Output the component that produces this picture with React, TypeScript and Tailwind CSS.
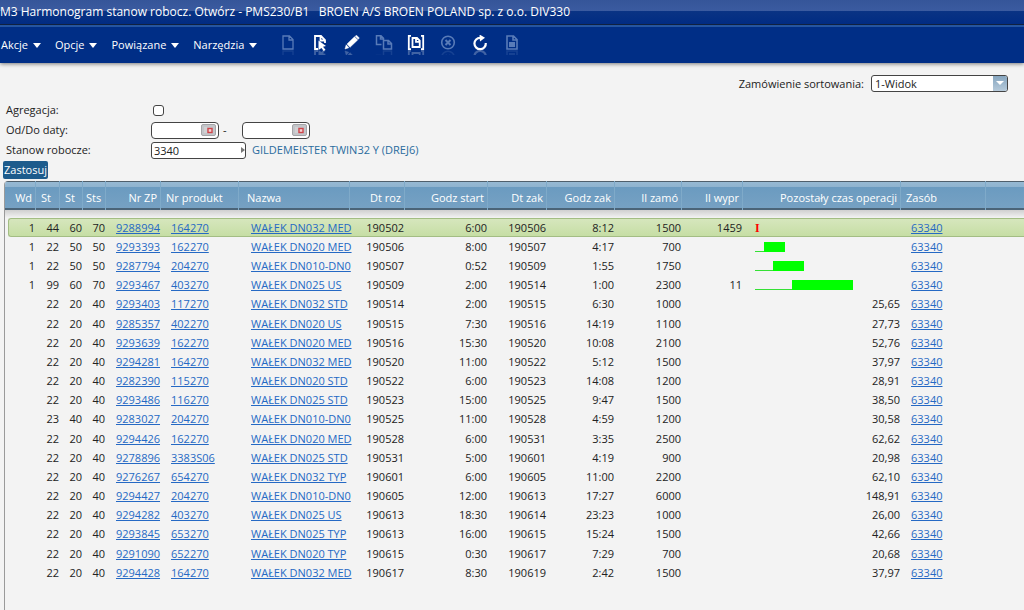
import React, { useState } from 'react';

interface Bar {
  offset: number;
  width: number;
}

interface Operation {
  wd: string;
  st1: string;
  st2: string;
  sts: string;
  order: string;
  product: string;
  name: string;
  startDate: string;
  startTime: string;
  endDate: string;
  endTime: string;
  ordered: string;
  produced: string;
  remaining: string | Bar;
}

const op = (
  wd: string, st1: string, st2: string, sts: string, order: string, product: string, name: string,
  startDate: string, startTime: string, endDate: string, endTime: string,
  ordered: string, produced: string, remaining: string | Bar,
): Operation => ({ wd, st1, st2, sts, order, product, name, startDate, startTime, endDate, endTime, ordered, produced, remaining });

const operations: Operation[] = [
  op('1', '44', '60', '70', '9288994', '164270', 'WAŁEK DN032 MED', '190502', '6:00', '190506', '8:12', '1500', '1459', 'I'),
  op('1', '22', '50', '50', '9293393', '162270', 'WAŁEK DN020 MED', '190506', '8:00', '190507', '4:17', '700', '', { offset: 9, width: 21 }),
  op('1', '22', '50', '50', '9287794', '204270', 'WAŁEK DN010-DN0', '190507', '0:52', '190509', '1:55', '1750', '', { offset: 18, width: 31 }),
  op('1', '99', '60', '70', '9293467', '403270', 'WAŁEK DN025 US', '190509', '2:00', '190514', '1:00', '2300', '11', { offset: 37, width: 61 }),
  op('', '22', '20', '40', '9293403', '117270', 'WAŁEK DN032 STD', '190514', '2:00', '190515', '6:30', '1000', '', '25,65'),
  op('', '22', '20', '40', '9285357', '402270', 'WAŁEK DN020 US', '190515', '7:30', '190516', '14:19', '1100', '', '27,73'),
  op('', '22', '20', '40', '9293639', '162270', 'WAŁEK DN020 MED', '190516', '15:30', '190520', '10:08', '2100', '', '52,76'),
  op('', '22', '20', '40', '9294281', '164270', 'WAŁEK DN032 MED', '190520', '11:00', '190522', '5:12', '1500', '', '37,97'),
  op('', '22', '20', '40', '9282390', '115270', 'WAŁEK DN020 STD', '190522', '6:00', '190523', '14:08', '1200', '', '28,91'),
  op('', '22', '20', '40', '9293486', '116270', 'WAŁEK DN025 STD', '190523', '15:00', '190525', '9:47', '1500', '', '38,50'),
  op('', '23', '40', '40', '9283027', '204270', 'WAŁEK DN010-DN0', '190525', '11:00', '190528', '4:59', '1200', '', '30,58'),
  op('', '22', '20', '40', '9294426', '162270', 'WAŁEK DN020 MED', '190528', '6:00', '190531', '3:35', '2500', '', '62,62'),
  op('', '22', '20', '40', '9278896', '3383S06', 'WAŁEK DN025 STD', '190531', '5:00', '190601', '4:19', '900', '', '20,98'),
  op('', '22', '20', '40', '9276267', '654270', 'WAŁEK DN032 TYP', '190601', '6:00', '190605', '11:00', '2200', '', '62,10'),
  op('', '22', '20', '40', '9294427', '204270', 'WAŁEK DN010-DN0', '190605', '12:00', '190613', '17:27', '6000', '', '148,91'),
  op('', '22', '20', '40', '9294282', '403270', 'WAŁEK DN025 US', '190613', '18:30', '190614', '23:23', '1000', '', '26,00'),
  op('', '22', '20', '40', '9293845', '653270', 'WAŁEK DN025 TYP', '190613', '16:00', '190615', '15:24', '1500', '', '42,66'),
  op('', '22', '20', '40', '9291090', '652270', 'WAŁEK DN020 TYP', '190615', '0:30', '190617', '7:29', '700', '', '20,68'),
  op('', '22', '20', '40', '9294428', '164270', 'WAŁEK DN032 MED', '190617', '8:30', '190619', '2:42', '1500', '', '37,97'),
];

const docPath = 'M5 1h6.5L15 4.5V14H5zM11 1v4h4';

const tools = [
  { label: 'Nowy', enabled: false, art: <path d={docPath} /> },
  {
    label: 'Wybierz',
    enabled: true,
    art: (
      <>
        <path d="M8 14H5V1h6l4 4v3M10.5 1v4.500H15" strokeWidth="1.8" />
        <path d="M8.500 5.500l7.500 5.500-3 .8 2.500 3-1.800 1.200-2.200-3-3 2z" fill="currentColor" stroke="none" />
      </>
    ),
  },
  {
    label: 'Zmień',
    enabled: true,
    art: <path d="M3 14l1.200-4.200L6.800 12.700zM5 9l7.500-7.200 3.200 3.100L8 12.300zM13.200 1.200L14.500.2l2.800 2.800-1.100 1.300z" fill="currentColor" stroke="currentColor" strokeWidth=".5" />,
  },
  {
    label: 'Kopiuj',
    enabled: false,
    art: <path d="M7.500 9.500H2.500V.8h4.500l2.500 2.500V5M6.500 1v3h3M9.500 5.500h5l3 3V14h-8zM14 5.500V9h3.500" strokeWidth="1.500" />,
  },
  {
    label: 'Wyświetl',
    enabled: true,
    art: (
      <>
        <path d="M5 .8H2.800v13.400H5M15 .8h2.200v13.400H15" strokeWidth="1.800" />
        <path d="M6.500 3h4.500l2.700 2.700v6.300H6.500zM10 3v3.800h3.500" strokeWidth="1.800" />
      </>
    ),
  },
  {
    label: 'Usuń',
    enabled: false,
    art: (
      <>
        <circle cx="10" cy="7.500" r="6.300" strokeWidth="1.600" />
        <path d="M7.500 5l5 5M12.500 5l-5 5" strokeWidth="2" />
      </>
    ),
  },
  {
    label: 'Odśwież',
    enabled: true,
    art: (
      <>
        <path d="M15.800 8a5.700 5.700 0 1 1-5.500-5.200" strokeWidth="2.200" />
        <path d="M9.500-.5l5.500 3.200-5 3.800z" fill="currentColor" stroke="none" />
      </>
    ),
  },
  {
    label: 'Raport',
    enabled: false,
    art: (
      <>
        <path d={docPath} strokeWidth="1.600" />
        <path d="M7 7h6v5H7z" fill="currentColor" stroke="none" />
      </>
    ),
  },
];

// Toolbar glyph with the faint mirror image under it
const ToolIcon: React.FC<{ children: React.ReactNode }> = ({ children }) => (
  <svg viewBox="0 0 20 20" className="w-5 h-5 block" fill="none" stroke="currentColor" strokeWidth="1.300" aria-hidden="true">
    <g>{children}</g>
    <g transform="matrix(1 0 0 -1 0 30)" opacity="0.25">{children}</g>
  </svg>
);

const DateField: React.FC<{ id: string; label: string }> = ({ id, label }) => (
  <div className="flex items-center w-[68px] h-[17px] pr-0.5 bg-white border border-[#444] rounded-[4px]">
    <input type="text" id={id} aria-label={label} className="flex-1 min-w-0 h-full px-0.5 bg-transparent outline-none" />
    <button type="button" aria-label="Kalendarz" className="flex items-center justify-center w-[15px] h-3 bg-[#c3c5c9] border border-[#a5a5a8] rounded-[2px]">
      <svg viewBox="0 0 11 9" className="w-[11px] h-[9px]" aria-hidden="true">
        <path d="M1 2h3M1 4h3M1 6h3" stroke="#e0dcdc" />
        <rect x="5" y="2.500" width="4" height="4" fill="#f4d5d5" stroke="#d0454a" strokeWidth="1.400" />
      </svg>
    </button>
  </div>
);

const RemainingCell: React.FC<{ value: string | Bar }> = ({ value }) => {
  if (typeof value !== 'string') {
    return (
      <div className="flex items-end h-2.5 pl-3">
        <div className="h-px bg-[#35e035]" style={{ width: value.offset }} />
        <div className="h-2.5 bg-[#00ff00]" style={{ width: value.width }} />
      </div>
    );
  }
  if (value === 'I') {
    return <div className="pl-3 text-left text-[#ff0000] font-bold text-[12px] font-['Liberation_Serif',serif]">I</div>;
  }
  return <>{value}</>;
};

const App: React.FC = () => {
  const [sorting, setSorting] = useState('1-Widok');
  const [aggregate, setAggregate] = useState(false);
  const [workCenter, setWorkCenter] = useState('3340');

  const thBase = 'font-normal border-r border-[#7faac9] whitespace-nowrap pt-1';
  const thLeft = `${thBase} text-left pl-[5px]`;
  const thRight = `${thBase} text-right pr-[3px]`;
  const linkClasses = 'text-[#2569c4] underline underline-offset-1';

  return (
    <div className="min-h-screen flex flex-col bg-[#f3f3f3] text-[#222] text-[11px] leading-4 font-['Open_Sans','Noto_Sans',sans-serif] overflow-x-hidden">
      <header className="text-white shadow-[0_1px_4px_rgba(0,0,0,0.5)]">
        <div className="h-[25px] flex items-center bg-[linear-gradient(#355599_0,#3b5ba0_11px,#0a3384_11px,#012c82_100%)] border-b border-[#10213f]">
          <h1 className="text-[12px] whitespace-pre">{'M3 Harmonogram stanow robocz. Otwórz - PMS230/B1   BROEN A/S BROEN POLAND sp. z o.o. DIV330'}</h1>
        </div>
        <div className="h-[38px] flex items-center bg-[#002e86] border-t-2 border-[#2555a0]">
          <nav className="flex gap-3.5 pl-px">
            {['Akcje', 'Opcje', 'Powiązane', 'Narzędzia'].map(item => (
              <button key={item} type="button" className="flex items-center gap-[5px]">
                {item}
                <svg viewBox="0 0 8 5" className="w-2 h-[5px]" fill="currentColor" aria-hidden="true"><path d="M0 0h8L4 5z" /></svg>
              </button>
            ))}
          </nav>
          <div className="flex gap-3 ml-[21px]">
            {tools.map(tool => (
              <button key={tool.label} type="button" aria-label={tool.label} disabled={!tool.enabled} className="text-white disabled:text-[#587bb8]">
                <ToolIcon>{tool.art}</ToolIcon>
              </button>
            ))}
          </div>
        </div>
      </header>

      <form onSubmit={e => e.preventDefault()} className="pt-3">
        <div className="flex items-center justify-end gap-[7px] pr-4">
          <label htmlFor="sorting">Zamówienie sortowania:</label>
          <div className="relative w-[137px]">
            <select
              id="sorting"
              value={sorting}
              onChange={e => setSorting(e.target.value)}
              className="block appearance-none w-full h-[17px] pl-[3px] bg-white border border-[#444] rounded-[3px] leading-[14px]"
            >
              <option>1-Widok</option>
              <option>2-Widok</option>
            </select>
            <span className="pointer-events-none absolute inset-y-px right-px w-3.5 flex items-center justify-center bg-linear-to-b from-[#86a5bf] to-[#b7cbdb] rounded-r-[2px]">
              <svg viewBox="0 0 8 5" className="w-2 h-[5px]" fill="#fff" aria-hidden="true"><path d="M0 0h8L4 4z" /></svg>
            </span>
          </div>
        </div>

        <div className="grid grid-cols-[145px_1fr] auto-rows-[20px] items-center pl-1.5 pt-2">
          <label htmlFor="aggregate">Agregacja:</label>
          <input
            type="checkbox"
            id="aggregate"
            checked={aggregate}
            onChange={e => setAggregate(e.target.checked)}
            className="appearance-none w-[11px] h-[11px] ml-0.5 bg-white border border-[#444] rounded-[3px] checked:bg-[#1d5b8c]"
          />
          <label htmlFor="dateFrom">Od/Do daty:</label>
          <div className="flex items-center">
            <DateField id="dateFrom" label="Od daty" />
            <span className="w-[23px] pl-1">-</span>
            <DateField id="dateTo" label="Do daty" />
          </div>
          <label htmlFor="workCenter">Stanow robocze:</label>
          <div className="flex items-center gap-1.5">
            <div className="flex items-center w-[95px] h-[17px] bg-white border border-[#444] rounded-[3px]">
              <input
                type="text"
                id="workCenter"
                value={workCenter}
                onChange={e => setWorkCenter(e.target.value)}
                className="flex-1 min-w-0 h-full pl-0.5 bg-transparent outline-none"
              />
              <button type="button" aria-label="Przeglądaj">
                <svg viewBox="0 0 4 6" className="w-1 h-1.5" fill="#777" aria-hidden="true"><path d="M0 0l4 3-4 3z" /></svg>
              </button>
            </div>
            <span className="text-[#2a6c9e]">GILDEMEISTER TWIN32 Y (DREJ6)</span>
          </div>
        </div>
        <button type="submit" className="block h-[18px] px-px ml-[3px] mt-px bg-[#1d5b8c] rounded-[2px] text-white leading-4 text-center">
          Zastosuj
        </button>
      </form>

      <div className="flex-1 mt-0.5 ml-1 border-l border-[#9a9a9a] rounded-tl-[4px] overflow-hidden">
        <table className="table-fixed w-full border-separate border-spacing-0">
          <colgroup>
            <col className="w-[3px]" />
            <col className="w-7" />
            <col className="w-6" />
            <col className="w-[23px]" />
            <col className="w-[23px]" />
            <col className="w-[55px]" />
            <col className="w-[78px]" />
            <col className="w-[111px]" />
            <col className="w-[55px]" />
            <col className="w-[83px]" />
            <col className="w-[59px]" />
            <col className="w-[68px]" />
            <col className="w-[67px]" />
            <col className="w-[61px]" />
            <col className="w-[158px]" />
            <col className="w-[85px]" />
            <col />
          </colgroup>
          <thead>
            <tr className="h-[29px] text-white bg-[linear-gradient(#4f5f6c_0,#4f5f6c_1px,#96b9d3_1px,#8fb3cf_6px,#6b9bc0_6px,#76a1c3_27px,#4b6478_27px,#4b6478_100%)]">
              <th colSpan={2} className={thRight}>Wd</th>
              <th className={thLeft}>St</th>
              <th className={thLeft}>St</th>
              <th className={`${thBase} text-left pl-[3px]`}>Sts</th>
              <th className={thRight}>Nr ZP</th>
              <th className={thLeft}>Nr produkt</th>
              <th className={`${thBase} text-left pl-2`}>Nazwa</th>
              <th className={thRight}>Dt roz</th>
              <th className={thRight}>Godz start</th>
              <th className={thRight}>Dt zak</th>
              <th className={thRight}>Godz zak</th>
              <th className={thRight}>Il zamó</th>
              <th className={thRight}>Il wypr</th>
              <th className={thRight}>Pozostały czas operacji</th>
              <th className={thLeft}>Zasób</th>
              <th />
            </tr>
          </thead>
          <tbody className="text-right [&_td]:pr-px [&_td]:leading-4">
            <tr aria-hidden="true" className="h-2 bg-linear-to-b from-[#cfcfcf] to-[#f3f3f3]"><td colSpan={17} /></tr>
            {operations.map((row, i) => {
              const cell = i === 0 ? 'whitespace-nowrap bg-linear-to-b from-[#d6e6bd] to-[#c6dea4] border-y border-[#a3bd84]' : 'whitespace-nowrap';
              return (
                <tr key={row.order} className="h-[19px] nth-[6n]:h-5">
                  <td />
                  <td className={i === 0 ? `${cell} border-l rounded-l-[3px]` : cell}>{row.wd}</td>
                  <td className={cell}>{row.st1}</td>
                  <td className={cell}>{row.st2}</td>
                  <td className={cell}>{row.sts}</td>
                  <td className={cell}><a href="#" className={linkClasses}>{row.order}</a></td>
                  <td className={`${cell} text-left pl-2.5`}><a href="#" className={linkClasses}>{row.product}</a></td>
                  <td className={`${cell} text-left pl-3`}><a href="#" className={linkClasses}>{row.name}</a></td>
                  <td className={cell}>{row.startDate}</td>
                  <td className={cell}>{row.startTime}</td>
                  <td className={cell}>{row.endDate}</td>
                  <td className={cell}>{row.endTime}</td>
                  <td className={cell}>{row.ordered}</td>
                  <td className={cell}>{row.produced}</td>
                  <td className={cell}><RemainingCell value={row.remaining} /></td>
                  <td className={`${cell} text-left pl-2.5`}><a href="#" className={linkClasses}>63340</a></td>
                  <td className={cell} />
                </tr>
              );
            })}
          </tbody>
        </table>
      </div>
    </div>
  );
};

export default App;
